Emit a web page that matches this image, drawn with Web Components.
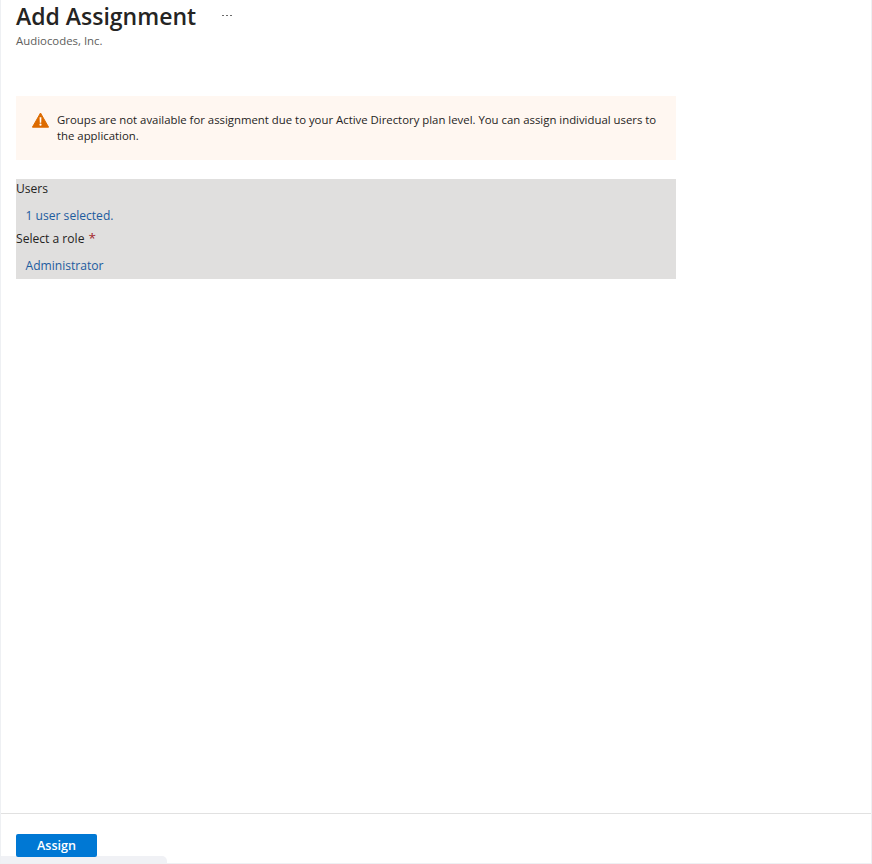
<!DOCTYPE html>
<html><head><meta charset="utf-8"><style>
html,body{margin:0;height:100%;background:#fff}
body{font-family:"Open Sans","Noto Sans",sans-serif;overflow:hidden}
</style></head><body>
<blade-page>
<blade-header title="Add Assignment" sub="Audiocodes, Inc."></blade-header>
<warn-banner>Groups are not available for assignment due to your Active Directory plan level. You can assign individual users to the application.</warn-banner>
<disabled-form>
<form-field label="Users" value="1 user selected."></form-field>
<form-field label="Select a role" value="Administrator" required></form-field>
</disabled-form>
</blade-page>
<script>
function def(name,html,init){customElements.define(name,class extends HTMLElement{connectedCallback(){if(this.shadowRoot)return;const r=this.attachShadow({mode:'open'});r.innerHTML=html;if(init)init(this,r);}});}
def('blade-page',`<style>
:host{display:flex;flex-direction:column;box-sizing:border-box;width:872px;height:864px;border:solid #eef0f3;border-width:0 1px 1px 1px;position:relative;overflow:hidden}
main{flex:1;padding:0 15px;display:flex;flex-direction:column;align-items:flex-start}
footer{height:50px;box-sizing:border-box;border-top:1px solid #e1e1e1;padding:20px 15px 0}
button{display:block;position:relative;z-index:1;width:81px;height:23px;padding:0;border:0;border-radius:2px;background:#0078d4;color:#fff;font:600 12.6px "Open Sans",sans-serif}
.scroll{position:absolute;left:0;bottom:0;width:166px;height:7px;background:#f0f1f5;border-radius:0 5px 0 0}
</style><main><slot></slot></main><footer><button>Assign</button></footer><div class="scroll"></div>`);
def('blade-header',`<style>
:host{display:block;height:96px}
.t{display:flex;align-items:center;height:33px}
h1{margin:0;font:600 23px/33px "Open Sans",sans-serif;color:#252423}
.m{margin-left:26px;display:flex;gap:2px;margin-top:-2px}
.m i{width:2px;height:1px;background:#6b6b6b;display:block}
p{margin:0;font:400 11.4px/15px "Open Sans",sans-serif;color:#605e5c}
</style><div class="t"><h1></h1><div class="m"><i></i><i></i><i></i></div></div><p></p>`,(h,r)=>{r.querySelector('h1').textContent=h.getAttribute('title');r.querySelector('p').textContent=h.getAttribute('sub');h.removeAttribute('title')});
def('warn-banner',`<style>
:host{display:flex;box-sizing:border-box;width:660px;height:64px;margin-bottom:19px;background:#fff7f1;padding:16px 16px 0 16px;gap:8px;color:#252423;font:400 11.37px/16px "Open Sans",sans-serif}
svg{flex:none;width:17px;height:16px;margin-top:0}
</style><svg viewBox="0 0 17 16"><path d="M8.5 1 16.6 15.2H.4Z" fill="#dd6b00" stroke="#dd6b00" stroke-linejoin="round"/><path d="M7.6 5.2h1.8l-.2 5.6H7.8Z M8.5 11.6a1.1 1.1 0 1 1 0 2.2 1.1 1.1 0 0 1 0-2.2Z" fill="#fff"/></svg><div><slot></slot></div>`);
def('disabled-form',`<style>
:host{display:block;width:660px;height:100px;background:#e0dfde}
</style><slot></slot>`);
def('form-field',`<style>
:host{display:block;height:50px;font:400 12.1px/19px "Open Sans",sans-serif;color:#252423}
.v{display:block;margin-top:8px;padding-left:9.5px;color:#1d5c9e;line-height:19px}
.l{height:19px}
b{font-weight:400;color:#a4262c;font-size:13.5px;margin-left:1px}
</style><div class="l"></div><span class="v"></span>`,(h,r)=>{r.querySelector('.l').innerHTML=h.getAttribute('label')+(h.hasAttribute('required')?' <b>*</b>':'');r.querySelector('.v').textContent=h.getAttribute('value')});
</script>
</body></html>
